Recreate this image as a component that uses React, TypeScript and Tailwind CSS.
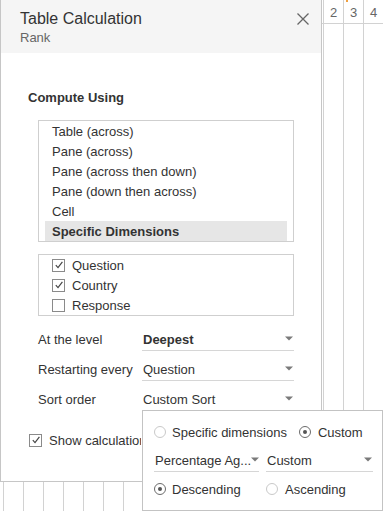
import React from "react";

const computeOptions = [
  "Table (across)",
  "Pane (across)",
  "Pane (across then down)",
  "Pane (down then across)",
  "Cell",
  "Specific Dimensions",
];

const dims = [
  { label: "Question", checked: true },
  { label: "Country", checked: true },
  { label: "Response", checked: false },
];

function Caret() {
  return (
    <svg width="8" height="5" viewBox="0 0 8 5" className="shrink-0">
      <path d="M0 0.5 L8 0.5 L4 4.5 Z" fill="#7a7a7a" />
    </svg>
  );
}

function Check({ checked }: { checked: boolean }) {
  return (
    <span className="w-[13px] h-[13px] border border-[#8a8a8a] bg-white flex items-center justify-center shrink-0">
      {checked && (
        <svg width="10" height="10" viewBox="0 0 10 10">
          <path d="M1.8 5.2 L4 7.6 L8.4 1.8" fill="none" stroke="#444" strokeWidth="1.2" />
        </svg>
      )}
    </span>
  );
}

function Radio({ on }: { on: boolean }) {
  return (
    <span
      className={
        on
          ? "w-[12px] h-[12px] rounded-full border border-[#6b6b6b] flex items-center justify-center shrink-0"
          : "w-[12px] h-[12px] rounded-full border border-[#c9c9c9] shrink-0"
      }
    >
      {on && <span className="w-[4px] h-[4px] rounded-full bg-[#555]" />}
    </span>
  );
}

function Dropdown({ value, bold, width }: { value: string; bold?: boolean; width: string }) {
  return (
    <div className={`${width} h-[24px] flex items-center justify-between border-b border-[#d6d6d6] pl-[1px] pr-[1px]`}>
      <span className={bold ? "font-bold whitespace-nowrap relative top-[1px]" : "whitespace-nowrap relative top-[1px]"}>{value}</span>
      <Caret />
    </div>
  );
}

export default function App() {
  const cols = Array.from({ length: 19 }, (_, i) => i);
  const numbers: Record<number, string> = { 16: "2", 17: "3", 18: "4" };

  return (
    <div className="relative w-[383px] h-[511px] overflow-hidden bg-white text-[13px] text-[#333] font-['Liberation_Sans',Arial,sans-serif]">
      {/* sheet grid behind the dialog */}
      <div className="flex h-full pl-[3px]">
        {cols.map((c) => (
          <div key={c} className="w-[20px] shrink-0 h-full border-l border-[#d2d2d2]">
            <div className="h-[24px] border-b border-[#d2d2d2] flex items-center justify-center text-[#666] pt-[3px]">
              {numbers[c] ?? ""}
            </div>
          </div>
        ))}
      </div>
      <div className="absolute left-[346px] top-0 w-[2px] h-[2px] bg-[#f0a040]" />

      {/* dialog */}
      <div className="absolute left-0 top-0 w-[322px] h-[482px] bg-white border-l border-r border-b border-[#c6c6c6]">
        <div className="h-[53px] bg-[#f5f5f5] pl-[19px] pt-[9px] relative">
          <div className="text-[16px] leading-[20px] text-[#333]">Table Calculation</div>
          <div className="text-[13px] leading-[16px] text-[#666] mt-[1px]">Rank</div>
          <svg width="12" height="12" viewBox="0 0 12 12" className="absolute left-[296px] top-[13px]">
            <path d="M0.5 0.5 L11.5 11.5 M11.5 0.5 L0.5 11.5" stroke="#666" strokeWidth="1.3" />
          </svg>
        </div>

        <div className="pl-[27px] pt-[37px]">
          <div className="font-bold leading-[16px]">Compute Using</div>
        </div>

        <div className="ml-[37px] mt-[14px] w-[256px] border border-[#cfcfcf] px-[6px] leading-[20px]">
          {computeOptions.map((o, i) => (
            <div
              key={o}
              className={
                i === computeOptions.length - 1
                  ? "h-[20px] pl-[7px] pt-[1px] bg-[#e6e6e6] font-bold"
                  : "h-[20px] pl-[7px] pt-[1px]"
              }
            >
              {o}
            </div>
          ))}
        </div>

        <div className="ml-[37px] mt-[12px] w-[256px] border border-[#cfcfcf] pl-[13px]">
          {dims.map((d) => (
            <div key={d.label} className="h-[20px] flex items-center gap-[7px]">
              <Check checked={d.checked} />
              <span className="relative top-[1px]">{d.label}</span>
            </div>
          ))}
        </div>

        <div className="ml-[37px] mt-[8px] w-[256px]">
          <div className="h-[30px] flex items-center">
            <span className="w-[104px] shrink-0 relative top-[1px]">At the level</span>
            <Dropdown value="Deepest" bold width="w-[152px]" />
          </div>
          <div className="h-[30px] flex items-center">
            <span className="w-[104px] shrink-0 whitespace-nowrap relative top-[1px]">Restarting every</span>
            <Dropdown value="Question" width="w-[152px]" />
          </div>
          <div className="h-[30px] flex items-center">
            <span className="w-[104px] shrink-0 relative top-[1px]">Sort order</span>
            <Dropdown value="Custom Sort" width="w-[152px]" />
          </div>
        </div>

        <div className="ml-[28px] mt-[16px] h-[20px] flex items-center gap-[7px] whitespace-nowrap">
          <Check checked />
          <span className="w-[92px] overflow-hidden relative top-[1px]">Show calculation assistance</span>
        </div>
      </div>

      {/* custom sort popup */}
      <div className="absolute left-[142px] top-[410px] w-[241px] h-[101px] bg-white border border-[#c3c3c3] pl-[11px] pt-[11px]">
        <div className="h-[20px] flex items-center">
          <Radio on={false} />
          <span className="ml-[6px] relative top-[1px]">Specific dimensions</span>
          <span className="ml-[12px] flex items-center">
            <Radio on />
            <span className="ml-[7px] relative top-[1px]">Custom</span>
          </span>
        </div>
        <div className="mt-[6px] flex gap-[7px]">
          <Dropdown value="Percentage Ag..." width="w-[105px]" />
          <Dropdown value="Custom" width="w-[107px]" />
        </div>
        <div className="mt-[7px] h-[20px] flex items-center">
          <span className="w-[112px] flex items-center">
            <Radio on />
            <span className="ml-[6px] relative top-[1px]">Descending</span>
          </span>
          <Radio on={false} />
          <span className="ml-[7px] relative top-[1px]">Ascending</span>
        </div>
      </div>
    </div>
  );
}
